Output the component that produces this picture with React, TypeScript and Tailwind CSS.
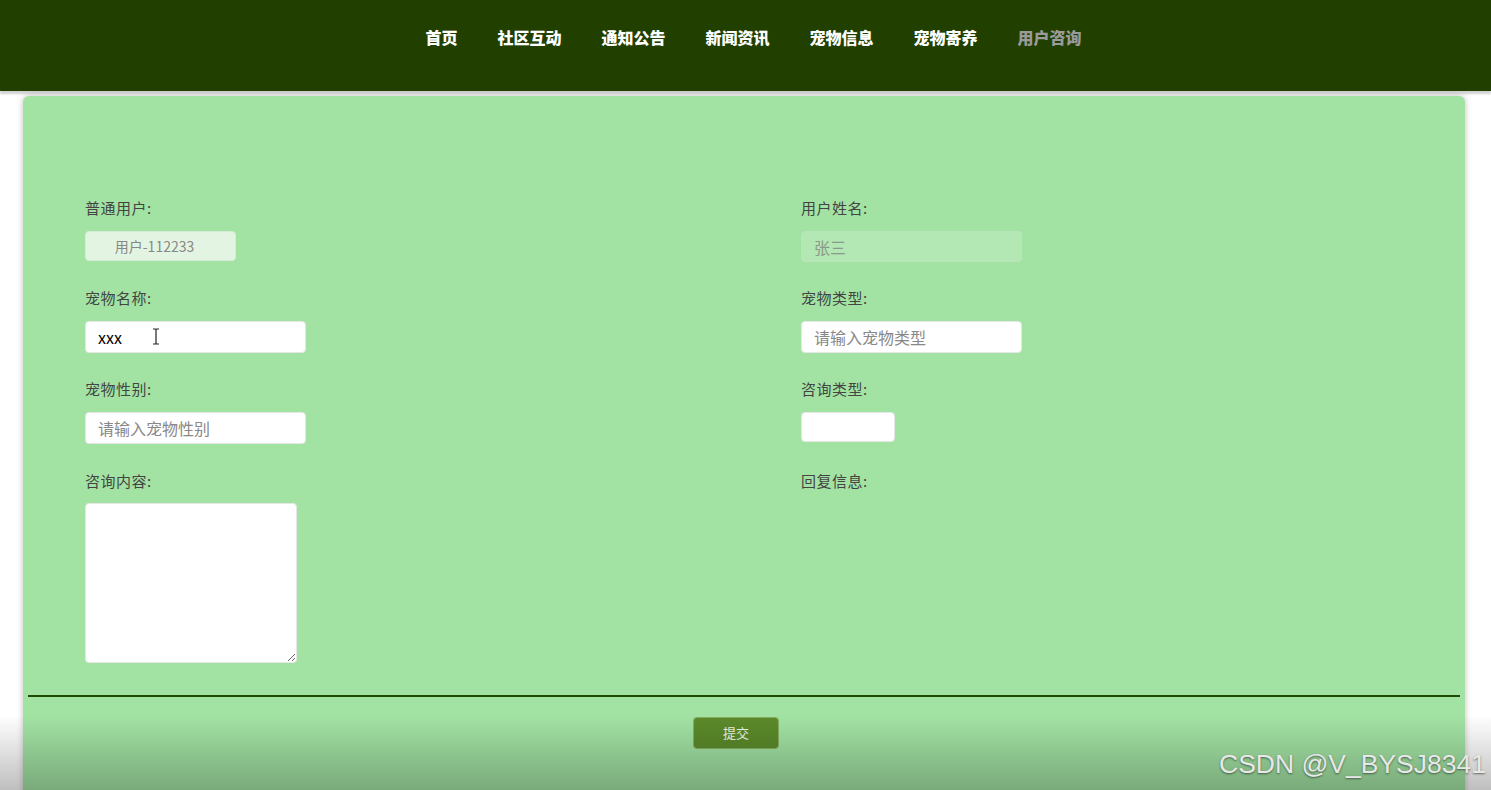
import { useState } from 'react';

const navItems = ['首页', '社区互动', '通知公告', '新闻资讯', '宠物信息', '宠物寄养', '用户咨询'];

const font = { fontFamily: '"Noto Sans CJK SC", "Noto Sans", sans-serif' };

function Label({ children }: { children: React.ReactNode }) {
  return <div className="h-5 text-[15px] leading-5 tracking-[0.5px] text-[#444]">{children}</div>;
}

export default function App() {
  const [name, setName] = useState('xxx');

  return (
    <div className="relative min-h-screen h-[790px] overflow-hidden bg-white" style={font}>
      {/* Header */}
      <header className="h-[91px] bg-[#214000] shadow-[0_3px_2px_rgba(0,0,0,0.18)] relative z-10">
        <nav className="flex justify-center pl-4 pt-[25px] gap-[40px]">
          {navItems.map((item, i) => (
            <a
              key={item}
              className={`text-[16px] leading-6 font-black ${i === navItems.length - 1 ? 'text-[#9a9a9a]' : 'text-white'}`}
            >
              {item}
            </a>
          ))}
        </nav>
      </header>

      {/* Card */}
      <div className="mx-[23px] w-[1442px] mt-[5px] bg-[#a2e3a3] rounded-md shadow-[0_0_6px_rgba(0,0,0,0.25)] pb-24">
        <form className="grid grid-cols-[716px_1fr] pl-[62px] pt-[102px]">
          {/* Left column */}
          <div className="flex flex-col">
            <Label>普通用户:</Label>
            <input
              disabled
              value="用户-112233"
              className="block mt-[13px] w-[151px] h-[30px] rounded bg-[#e3f5e2] border border-[#d5ecd5] text-center text-[14px] text-[#888] pr-3"
            />

            <div className="mt-[27px]">
              <Label>宠物名称:</Label>
            </div>
            <div className="relative mt-[13px] w-[221px] h-8">
              <input
                value={name}
                onChange={(e) => setName(e.target.value)}
                className="block w-[221px] h-8 rounded bg-white border border-[#e6e6e6] px-3 text-[16px] text-black outline-none"
              />
              <svg className="absolute left-[67px] top-[7px]" width="8" height="17" viewBox="0 0 8 17" fill="none" stroke="#222" strokeWidth="1.2">
                <path d="M1 1h2.2c.5 0 .8.4.8.8v13.4c0 .5.3.8.8.8H7M7 1H4.8c-.5 0-.8.4-.8.8M1 16h2.2c.5 0 .8-.4.8-.8" />
              </svg>
            </div>

            <div className="mt-[26px]">
              <Label>宠物性别:</Label>
            </div>
            <input
              placeholder="请输入宠物性别"
              className="block mt-[13px] w-[221px] h-8 rounded bg-white border border-[#e6e6e6] px-3 text-[16px] placeholder:text-[#888] outline-none"
            />

            <div className="mt-[27px]">
              <Label>咨询内容:</Label>
            </div>
            <textarea className="block mt-[12px] w-[212px] h-[160px] rounded bg-white border border-[#e6e6e6] outline-none" />
          </div>

          {/* Right column */}
          <div className="flex flex-col">
            <Label>用户姓名:</Label>
            <input
              disabled
              value="张三"
              className="block mt-[13px] w-[221px] h-[31px] rounded bg-[#b3e7b4] border border-[#b9e6b9] px-3 text-[16px] text-[#8a9a8a]"
            />

            <div className="mt-[26px]">
              <Label>宠物类型:</Label>
            </div>
            <input
              placeholder="请输入宠物类型"
              className="block mt-[13px] w-[221px] h-8 rounded bg-white border border-[#e6e6e6] px-3 text-[16px] placeholder:text-[#888] outline-none"
            />

            <div className="mt-[26px]">
              <Label>咨询类型:</Label>
            </div>
            <select className="block mt-[13px] w-[94px] h-[30px] rounded bg-white border border-[#e6e6e6] appearance-none outline-none" />

            <div className="mt-[29px]">
              <Label>回复信息:</Label>
            </div>
          </div>
        </form>

        <div className="mx-[5px] mt-[32px] h-[2px] bg-[#1f4a00]" />

        <div className="flex justify-center mt-5 pr-[16px]">
          <button
            type="button"
            className="w-[86px] h-8 rounded bg-[#5b8a2a] border border-[#86b060] text-[13px] text-[#eef5e6]"
          >
            提交
          </button>
        </div>
      </div>

      {/* Bottom dim overlay from the video capture */}
      <div className="pointer-events-none absolute left-0 right-0 bottom-0 h-[75px] bg-gradient-to-b from-transparent to-[rgba(0,0,0,0.25)]" />

      {/* Watermark */}
      <div
        className="pointer-events-none absolute right-[5px] bottom-[10px] text-[26.5px] leading-8 text-[#e8e8e8] [text-shadow:0_1px_2px_rgba(0,0,0,0.5)]"
        style={{ fontFamily: '"Liberation Sans", Arial, sans-serif' }}
      >
        CSDN @V_BYSJ8341
      </div>
    </div>
  );
}
